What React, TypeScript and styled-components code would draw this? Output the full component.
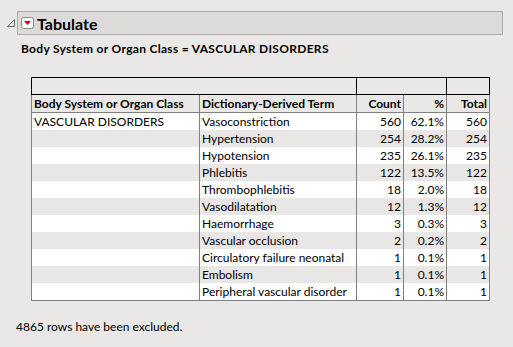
import React from "react";
import styled, { createGlobalStyle } from "styled-components";

const GlobalStyle = createGlobalStyle`
  html, body {
    margin: 0;
    padding: 0;
    background: #e9e8e6;
  }
  body {
    font-family: Lato, "Noto Sans", sans-serif;
    font-size: 12px;
    color: #000;
  }
`;

const Page = styled.div`
  width: 513px;
  height: 347px;
  background: #e9e8e6;
  padding: 11px 10px 0 7px;
  box-sizing: border-box;
`;

const OutlineRow = styled.div`
  display: flex;
  align-items: center;
  gap: 2px;
`;

const Disclosure = styled.div`
  width: 8px;
  height: 22px;
  display: flex;
  align-items: center;
`;

const TitleBar = styled.div`
  flex: 1;
  height: 22px;
  display: flex;
  align-items: center;
  gap: 3px;
  padding-left: 3px;
  border: 1px solid #acacac;
  background: #dcdbd9;
`;

const Title = styled.span`
  font-size: 16px;
  font-weight: bold;
`;

const Content = styled.div`
  padding: 6px 0 0 14px;
`;

const Caption = styled.div`
  font-weight: bold;
  font-size: 12px;
  height: 16px;
  line-height: 16px;
  letter-spacing: 0.3px;
`;

const Table = styled.table`
  margin: 20px 0 0 10px;
  border-collapse: collapse;
  table-layout: fixed;
  width: 458px;
`;

const GroupCell = styled.td`
  height: 16px;
  padding: 0;
  border: 1px solid #000;
  background: #e9e8e6;
`;

const HeadCell = styled.th<{ $right?: boolean }>`
  height: 17px;
  padding: 0 2px;
  font-weight: bold;
  text-align: ${(p) => (p.$right ? "right" : "left")};
  border: 1px solid #808080;
  background: #e9e8e6;
  white-space: nowrap;
  overflow: hidden;
`;

const Row = styled.tr<{ $shade: boolean }>`
  background: ${(p) => (p.$shade ? "#e8e7e5" : "#ffffff")};
`;

const Cell = styled.td<{ $right?: boolean }>`
  height: 17px;
  padding: 0 2px;
  line-height: 17px;
  text-align: ${(p) => (p.$right ? "right" : "left")};
  border-left: 1px solid #808080;
  border-right: 1px solid #808080;
  white-space: nowrap;
  overflow: hidden;
`;

const Body = styled.tbody`
  tr:last-child td {
    border-bottom: 1px solid #808080;
  }
`;

const Footer = styled.div`
  margin: 18px 0 0 9px;
  font-size: 12px;
`;

const rows: [string, number, string][] = [
  ["Vasoconstriction", 560, "62.1%"],
  ["Hypertension", 254, "28.2%"],
  ["Hypotension", 235, "26.1%"],
  ["Phlebitis", 122, "13.5%"],
  ["Thrombophlebitis", 18, "2.0%"],
  ["Vasodilatation", 12, "1.3%"],
  ["Haemorrhage", 3, "0.3%"],
  ["Vascular occlusion", 2, "0.2%"],
  ["Circulatory failure neonatal", 1, "0.1%"],
  ["Embolism", 1, "0.1%"],
  ["Peripheral vascular disorder", 1, "0.1%"],
];

function DisclosureIcon() {
  return (
    <svg width="8" height="8" viewBox="0 0 8 8">
      <path d="M7.5 0.5 L7.5 7.5 L0.5 7.5 Z" fill="none" stroke="#6a6a6a" strokeWidth="1" />
    </svg>
  );
}

function RedTriangleButton() {
  return (
    <svg width="13" height="12" viewBox="0 0 13 12">
      <rect x="0.5" y="0.5" width="12" height="11" rx="2" fill="#fff" stroke="#8a8a8a" />
      <path d="M3 4 L10 4 L6.5 8 Z" fill="#d8001a" />
    </svg>
  );
}

export default function App() {
  return (
    <Page>
      <GlobalStyle />
      <OutlineRow>
        <Disclosure>
          <DisclosureIcon />
        </Disclosure>
        <TitleBar>
          <RedTriangleButton />
          <Title>Tabulate</Title>
        </TitleBar>
      </OutlineRow>
      <Content>
        <Caption>Body System or Organ Class = VASCULAR DISORDERS</Caption>
        <Table>
          <colgroup>
            <col style={{ width: 168 }} />
            <col style={{ width: 157 }} />
            <col style={{ width: 47 }} />
            <col style={{ width: 43 }} />
            <col style={{ width: 43 }} />
          </colgroup>
          <thead>
            <tr>
              <GroupCell colSpan={2} />
              <GroupCell colSpan={2} />
              <GroupCell />
            </tr>
            <tr>
              <HeadCell>Body System or Organ Class</HeadCell>
              <HeadCell>Dictionary-Derived Term</HeadCell>
              <HeadCell $right>Count</HeadCell>
              <HeadCell $right>%</HeadCell>
              <HeadCell $right>Total</HeadCell>
            </tr>
          </thead>
          <Body>
            {rows.map(([term, count, pct], i) => (
              <Row key={term} $shade={i % 2 === 1}>
                <Cell>{i === 0 ? "VASCULAR DISORDERS" : ""}</Cell>
                <Cell>{term}</Cell>
                <Cell $right>{count}</Cell>
                <Cell $right>{pct}</Cell>
                <Cell $right>{count}</Cell>
              </Row>
            ))}
          </Body>
        </Table>
      </Content>
      <Footer>4865 rows have been excluded.</Footer>
    </Page>
  );
}
